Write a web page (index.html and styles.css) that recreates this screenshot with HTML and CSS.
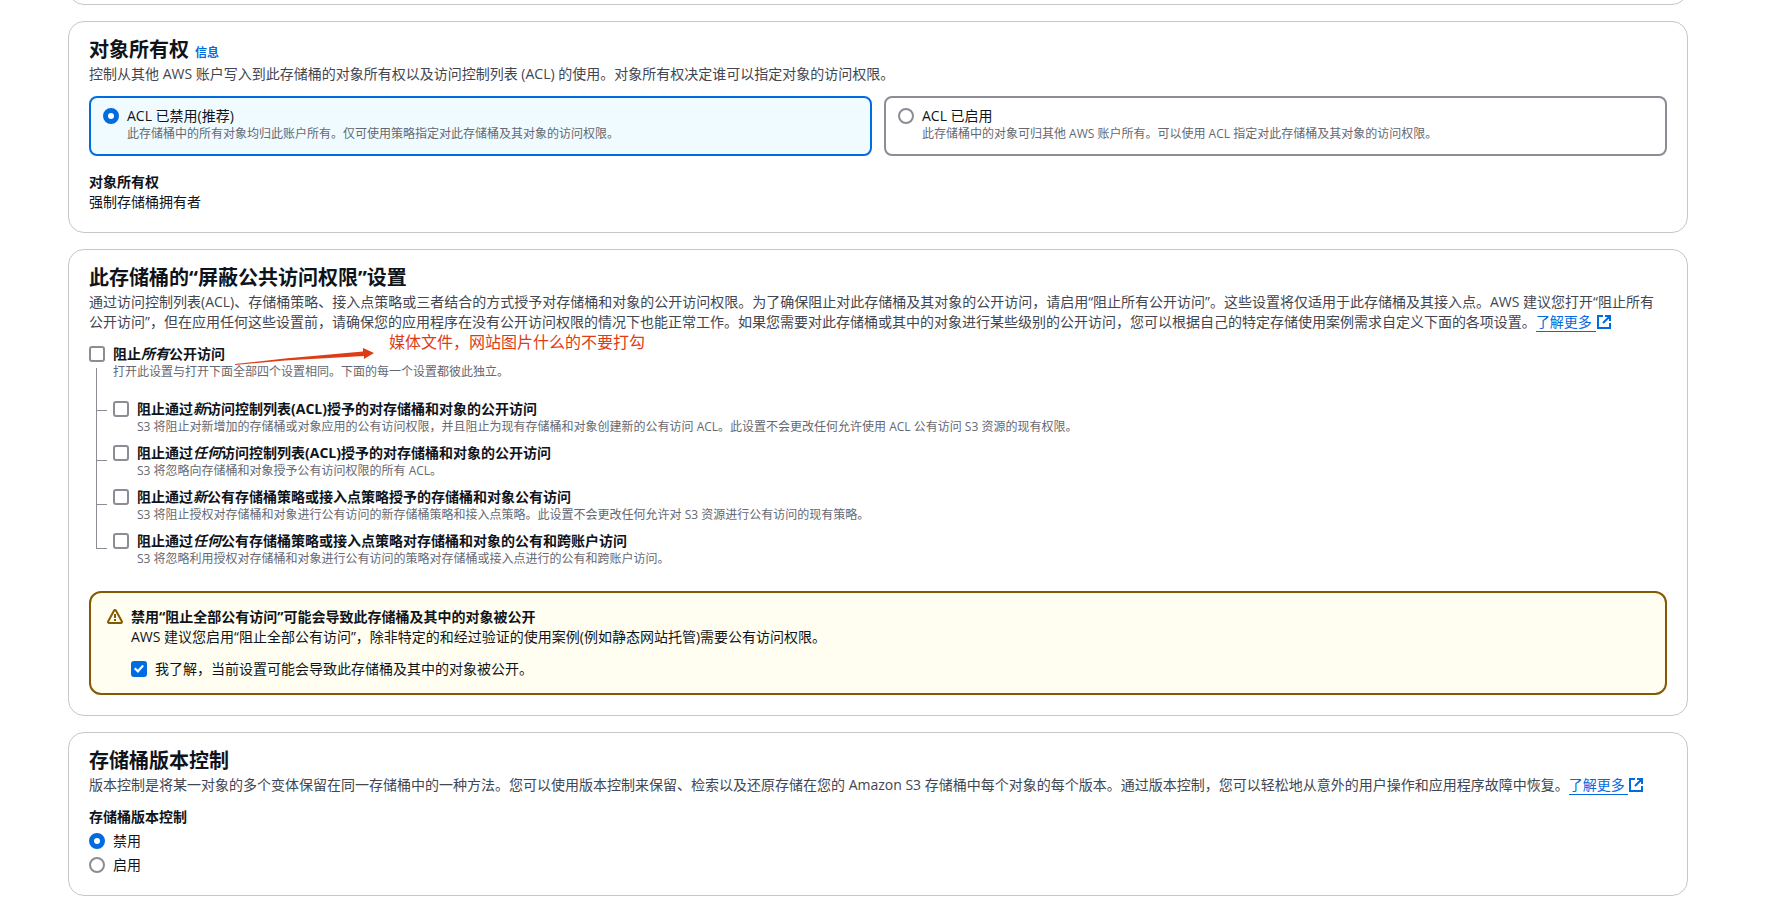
FILE: index.html
```html
<!DOCTYPE html>
<html lang="zh-CN">
<head>
<meta charset="UTF-8" />
<meta name="viewport" content="width=device-width, initial-scale=1" />
<title>创建存储桶</title>
<link rel="stylesheet" href="styles.css">
</head>
<body>
<main class="page">
  <div class="card card-previous"></div>

  <section class="card">
    <div class="card-header">
      <h2>对象所有权</h2>
      <a class="info" href="#">信息</a>
    </div>
    <p class="card-description">控制从其他 AWS 账户写入到此存储桶的对象所有权以及访问控制列表 (ACL) 的使用。对象所有权决定谁可以指定对象的访问权限。</p>
    <div class="tiles">
      <label class="tile selected">
        <input type="radio" name="acl" checked>
        <span class="option-text">
          <span class="option-label">ACL 已禁用(推荐)</span>
          <span class="option-description">此存储桶中的所有对象均归此账户所有。仅可使用策略指定对此存储桶及其对象的访问权限。</span>
        </span>
      </label>
      <label class="tile">
        <input type="radio" name="acl">
        <span class="option-text">
          <span class="option-label">ACL 已启用</span>
          <span class="option-description">此存储桶中的对象可归其他 AWS 账户所有。可以使用 ACL 指定对此存储桶及其对象的访问权限。</span>
        </span>
      </label>
    </div>
    <div class="field">
      <div class="field-label">对象所有权</div>
      <div>强制存储桶拥有者</div>
    </div>
  </section>

  <section class="card">
    <div class="card-header">
      <h2>此存储桶的“屏蔽公共访问权限”设置</h2>
    </div>
    <p class="card-description">通过访问控制列表(ACL)、存储桶策略、接入点策略或三者结合的方式授予对存储桶和对象的公开访问权限。为了确保阻止对此存储桶及其对象的公开访问，请启用“阻止所有公开访问”。这些设置将仅适用于此存储桶及其接入点。AWS 建议您打开“阻止所有公开访问”，但在应用任何这些设置前，请确保您的应用程序在没有公开访问权限的情况下也能正常工作。如果您需要对此存储桶或其中的对象进行某些级别的公开访问，您可以根据自己的特定存储使用案例需求自定义下面的各项设置。<a class="external" href="#"><span class="external-text">了解更多&nbsp;</span><svg class="external-icon" viewBox="0 0 14 14" aria-hidden="true"><path d="M6 1H1v12h12V8M8 1h5v5M13 1L6 8"/></svg></a></p>

    <div class="block-access">
      <label class="option">
        <input type="checkbox">
        <span class="option-text">
          <span class="option-label strong">阻止<em>所有</em>公开访问</span>
          <span class="option-description">打开此设置与打开下面全部四个设置相同。下面的每一个设置都彼此独立。</span>
        </span>
      </label>
      <div class="note">
        <svg class="note-arrow" viewBox="0 0 140 18" aria-hidden="true"><path d="M0 16L50 10.500L128 3.500V0L139 5L129 11V8L50 12.500L0 17Z"/></svg>
        <span>媒体文件，网站图片什么的不要打勾</span>
      </div>
      <ul class="tree">
        <li>
          <label class="option">
            <input type="checkbox">
            <span class="option-text">
              <span class="option-label strong">阻止通过<em>新</em>访问控制列表(ACL)授予的对存储桶和对象的公开访问</span>
              <span class="option-description">S3 将阻止对新增加的存储桶或对象应用的公有访问权限，并且阻止为现有存储桶和对象创建新的公有访问 ACL。此设置不会更改任何允许使用 ACL 公有访问 S3 资源的现有权限。</span>
            </span>
          </label>
        </li>
        <li>
          <label class="option">
            <input type="checkbox">
            <span class="option-text">
              <span class="option-label strong">阻止通过<em>任何</em>访问控制列表(ACL)授予的对存储桶和对象的公开访问</span>
              <span class="option-description">S3 将忽略向存储桶和对象授予公有访问权限的所有 ACL。</span>
            </span>
          </label>
        </li>
        <li>
          <label class="option">
            <input type="checkbox">
            <span class="option-text">
              <span class="option-label strong">阻止通过<em>新</em>公有存储桶策略或接入点策略授予的存储桶和对象公有访问</span>
              <span class="option-description">S3 将阻止授权对存储桶和对象进行公有访问的新存储桶策略和接入点策略。此设置不会更改任何允许对 S3 资源进行公有访问的现有策略。</span>
            </span>
          </label>
        </li>
        <li>
          <label class="option">
            <input type="checkbox">
            <span class="option-text">
              <span class="option-label strong">阻止通过<em>任何</em>公有存储桶策略或接入点策略对存储桶和对象的公有和跨账户访问</span>
              <span class="option-description">S3 将忽略利用授权对存储桶和对象进行公有访问的策略对存储桶或接入点进行的公有和跨账户访问。</span>
            </span>
          </label>
        </li>
      </ul>
    </div>

    <div class="alert">
      <svg class="alert-icon" viewBox="0 0 16 16" aria-hidden="true"><path d="M7.100 1.600a1 1 0 0 1 1.800 0l6 11a1 1 0 0 1-.9 1.400H2a1 1 0 0 1-.9-1.400z"/><path d="M8 5v4M8 10v2"/></svg>
      <div class="alert-body">
        <div class="alert-title">禁用“阻止全部公有访问”可能会导致此存储桶及其中的对象被公开</div>
        <div>AWS 建议您启用“阻止全部公有访问”，除非特定的和经过验证的使用案例(例如静态网站托管)需要公有访问权限。</div>
        <label class="option acknowledge">
          <input type="checkbox" checked>
          <span class="option-label">我了解，当前设置可能会导致此存储桶及其中的对象被公开。</span>
        </label>
      </div>
    </div>
  </section>

  <section class="card">
    <div class="card-header">
      <h2>存储桶版本控制</h2>
    </div>
    <p class="card-description">版本控制是将某一对象的多个变体保留在同一存储桶中的一种方法。您可以使用版本控制来保留、检索以及还原存储在您的 Amazon S3 存储桶中每个对象的每个版本。通过版本控制，您可以轻松地从意外的用户操作和应用程序故障中恢复。<a class="external" href="#"><span class="external-text">了解更多&nbsp;</span><svg class="external-icon" viewBox="0 0 14 14" aria-hidden="true"><path d="M6 1H1v12h12V8M8 1h5v5M13 1L6 8"/></svg></a></p>
    <fieldset class="versioning">
      <legend class="field-label">存储桶版本控制</legend>
      <label class="option">
        <input type="radio" name="versioning" checked>
        <span class="option-label">禁用</span>
      </label>
      <label class="option">
        <input type="radio" name="versioning">
        <span class="option-label">启用</span>
      </label>
    </fieldset>
  </section>
</main>
</body>
</html>
```

FILE: styles.css
```css
* {
  box-sizing: border-box;
}
body {
  margin: 0;
  background: #fff;
  color: #0f141a;
  font-family: "Open Sans", "Noto Sans CJK SC", sans-serif;
  font-size: 14px;
  line-height: 20px;
}
.page {
  display: flex;
  flex-direction: column;
  gap: 16px;
  padding: 0 92px 0 68px;
}
.card {
  border: 1px solid #c6c6cd;
  border-radius: 16px;
  padding: 16px 20px 20px;
}
/* only the bottom edge of the section above is in view */
.card-previous {
  height: 32px;
  margin-top: -27px;
  padding: 0;
}
.card-header {
  display: flex;
  align-items: baseline;
  gap: 6px;
}
h2 {
  margin: 0;
  font-size: 20px;
  line-height: 24px;
  font-weight: 700;
}
.card-description {
  margin: 2px 0 12px;
  color: #424650;
}
a {
  color: #006ce0;
  text-decoration: none;
}
.info {
  font-size: 12px;
  line-height: 16px;
  font-weight: 700;
}
.external {
  white-space: nowrap;
}
.external-text {
  border-bottom: 1px solid #006ce0;
}
.external-icon {
  width: 14px;
  height: 14px;
  margin-left: 1px;
  vertical-align: -2px;
  fill: none;
  stroke: #006ce0;
  stroke-width: 2;
}

/* radios and checkboxes */
input {
  appearance: none;
  flex: none;
  width: 16px;
  height: 16px;
  margin: 2px 0 0;
  border: 2px solid #8c8c94;
  background: #fff;
}
input[type="radio"] {
  border-radius: 50%;
}
input[type="radio"]:checked {
  border: 5px solid #006ce0;
}
input[type="checkbox"] {
  border-radius: 3px;
}
input[type="checkbox"]:checked {
  border-color: #006ce0;
  background: #006ce0;
  display: grid;
  place-items: center;
}
input[type="checkbox"]:checked::before {
  content: "";
  width: 10px;
  height: 8px;
  background: #fff;
  clip-path: polygon(0 50%, 15% 32%, 38% 60%, 82% 0, 100% 14%, 40% 100%);
}
.option {
  display: flex;
  gap: 8px;
}
.option-text {
  display: flex;
  flex-direction: column;
}
.option-description {
  font-size: 12px;
  line-height: 16px;
  color: #656871;
}
.strong,
.field-label,
.alert-title {
  font-weight: 700;
}

.tiles {
  display: grid;
  grid-template-columns: 1fr 1fr;
  gap: 12px;
}
.tile {
  display: flex;
  gap: 8px;
  padding: 8px 12px 12px;
  border: 2px solid #8c8c94;
  border-radius: 8px;
}
.tile.selected {
  border-color: #006ce0;
  background: #f0fbff;
}
.field {
  margin-top: 16px;
}

.block-access {
  position: relative;
}
.note {
  position: absolute;
  left: 146px;
  top: -12px;
  display: flex;
  gap: 14px;
  font-size: 16px;
  color: #de3c15;
}
.note-arrow {
  width: 140px;
  height: 18px;
  margin-top: 16px;
  fill: #de3c15;
}
.tree {
  display: flex;
  flex-direction: column;
  margin: 0 0 0 7px;
  padding: 0;
  list-style: none;
}
.tree li {
  position: relative;
  padding: 8px 0 0 17px;
}
.tree li:first-child {
  padding-top: 19px;
}
/* connector from the parent checkbox */
.tree li::before {
  content: "";
  position: absolute;
  left: 0;
  top: -25px;
  width: 10px;
  height: 50px;
  border: solid #8c8c94;
  border-width: 0 0 1px 1px;
}
.tree li:first-child::before {
  top: -12px;
  height: 42px;
}

.alert {
  display: flex;
  gap: 8px;
  margin-top: 24px;
  padding: 14px 16px;
  border: 2px solid #855900;
  border-radius: 12px;
  background: #fffef0;
}
.alert-icon {
  flex: none;
  width: 16px;
  height: 16px;
  margin-top: 2px;
  fill: none;
  stroke: #855900;
  stroke-width: 2;
  stroke-linejoin: round;
}
.acknowledge {
  margin-top: 12px;
}

.versioning {
  display: flex;
  flex-direction: column;
  gap: 4px;
  margin: 0;
  padding: 0;
  border: 0;
}
.versioning legend {
  padding: 0;
  margin-bottom: 4px;
}
```
